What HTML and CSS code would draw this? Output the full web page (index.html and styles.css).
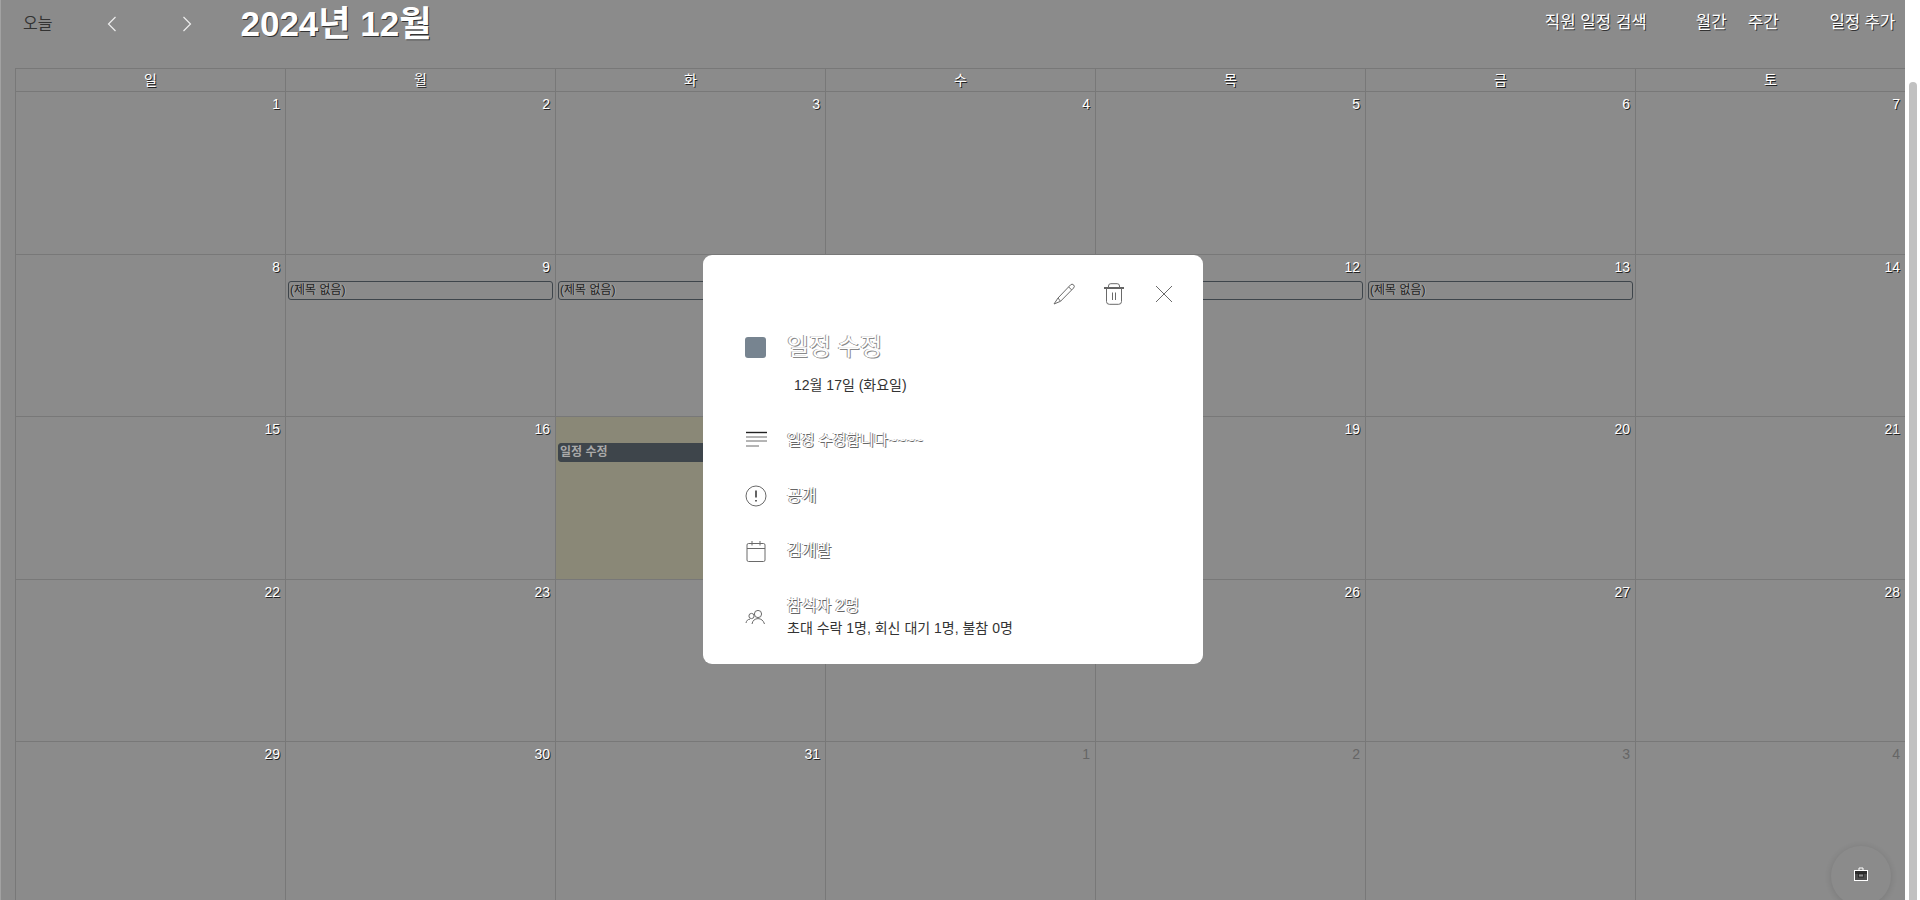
FILE: index.html
```html
<!DOCTYPE html>
<html lang="ko">
<head>
<meta charset="utf-8">
<title>일정 달력</title>
<link rel="stylesheet" href="styles.css">
</head>
<body>
<div class="page">
  <main class="main">
    <header class="toolbar">
      <div class="nav">
        <span class="today-btn">오늘</span>
        <svg class="chev chev-prev" viewBox="0 0 10 16"><path d="M8.500 1 1.500 8l7 7"/></svg>
        <svg class="chev chev-next" viewBox="0 0 10 16"><path d="M1.500 1l7 7-7 7"/></svg>
        <h1 class="month-title">2024년 12월</h1>
      </div>
      <div class="actions">
        <span class="action action-search">직원 일정 검색</span>
        <span class="action action-month">월간</span>
        <span class="action action-week">주간</span>
        <span class="action action-add">일정 추가</span>
      </div>
    </header>
    <section class="calendar">
      <div class="dow">일</div><div class="dow">월</div><div class="dow">화</div><div class="dow">수</div><div class="dow">목</div><div class="dow">금</div><div class="dow">토</div>
      <div class="day"><span class="num">1</span></div>
      <div class="day"><span class="num">2</span></div>
      <div class="day"><span class="num">3</span></div>
      <div class="day"><span class="num">4</span></div>
      <div class="day"><span class="num">5</span></div>
      <div class="day"><span class="num">6</span></div>
      <div class="day"><span class="num">7</span></div>
      <div class="day"><span class="num">8</span></div>
      <div class="day"><span class="num">9</span><div class="event">(제목 없음)</div></div>
      <div class="day"><span class="num">10</span><div class="event">(제목 없음)</div></div>
      <div class="day"><span class="num">11</span><div class="event">(제목 없음)</div></div>
      <div class="day"><span class="num">12</span><div class="event">(제목 없음)</div></div>
      <div class="day"><span class="num">13</span><div class="event">(제목 없음)</div></div>
      <div class="day"><span class="num">14</span></div>
      <div class="day"><span class="num">15</span></div>
      <div class="day"><span class="num">16</span></div>
      <div class="day day-today"><span class="num">17</span><div class="event event-solid">일정 수정</div></div>
      <div class="day"><span class="num">18</span></div>
      <div class="day"><span class="num">19</span></div>
      <div class="day"><span class="num">20</span></div>
      <div class="day"><span class="num">21</span></div>
      <div class="day"><span class="num">22</span></div>
      <div class="day"><span class="num">23</span></div>
      <div class="day"><span class="num">24</span></div>
      <div class="day"><span class="num">25</span></div>
      <div class="day"><span class="num">26</span></div>
      <div class="day"><span class="num">27</span></div>
      <div class="day"><span class="num">28</span></div>
      <div class="day"><span class="num">29</span></div>
      <div class="day"><span class="num">30</span></div>
      <div class="day"><span class="num">31</span></div>
      <div class="day"><span class="num num-other">1</span></div>
      <div class="day"><span class="num num-other">2</span></div>
      <div class="day"><span class="num num-other">3</span></div>
      <div class="day"><span class="num num-other">4</span></div>
    </section>
  </main>
  <aside class="scrollbar"><div class="thumb"></div></aside>
</div>

<div class="fab">
  <svg class="fab-icon" viewBox="0 0 14 14"><rect x="0.5" y="3.500" width="13" height="10" fill="#4a4a4a" stroke="#fff"/><path d="M5 3V1h4v2" fill="none" stroke="#fff"/><rect x="1" y="4" width="12" height="3" fill="#2b2b2b"/><rect x="4.500" y="7" width="5" height="3" fill="#8b8b8b" stroke="#222" stroke-width=".8"/></svg>
</div>

<div class="modal">
  <div class="modal-tools">
    <svg class="ico" viewBox="0 0 22 22"><path d="M5 15 17.500 1.900a2.200 2.200 0 0 1 3.100 0 2.200 2.200 0 0 1 0 3.100L7.500 18.300 1 21zM5 15l2.500 3.300M15.600 3.900l3 3"/></svg>
    <svg class="ico" viewBox="0 0 22 22"><path class="strong" d="M1 5h20"/><path d="M5.500 5V3a2.300 2.300 0 0 1 2.300-2.300h6.400A2.300 2.300 0 0 1 16.500 3v2M3.500 5v13.500A2.800 2.800 0 0 0 6.300 21.300h9.400a2.800 2.800 0 0 0 2.800-2.800V5M9.500 9.500v7.500M12.500 9.500v7.500"/></svg>
    <svg class="ico" viewBox="0 0 22 22"><path d="M3 3l16 16M19 3 3 19"/></svg>
  </div>
  <div class="row row-title">
    <span class="swatch"></span>
    <h2 class="title">일정 수정</h2>
  </div>
  <div class="date">12월 17일 (화요일)</div>
  <div class="row row-desc">
    <svg class="ico" viewBox="0 0 22 22"><path class="strong" d="M1 3.500h21"/><path d="M1 8h21M1 12h21M1 17h13"/></svg>
    <span class="body-text desc-text">일정 수정합니다~~~~</span>
  </div>
  <div class="row row-open">
    <svg class="ico" viewBox="0 0 22 22"><circle cx="11" cy="11" r="10"/><path class="strong" d="M11 5.500v7M11 15v1.600"/></svg>
    <span class="body-text">공개</span>
  </div>
  <div class="row row-owner">
    <svg class="ico" viewBox="0 0 22 22"><path d="M3.500 3.500h15a1.500 1.500 0 0 1 1.500 1.500v15a1.500 1.500 0 0 1-1.500 1.500h-15A1.500 1.500 0 0 1 2 20V5a1.500 1.500 0 0 1 1.500-1.500zM2 8.500h18M7 1v4.500M15 1v4.500"/></svg>
    <span class="body-text">김개발</span>
  </div>
  <div class="row row-people">
    <svg class="ico" viewBox="0 0 22 22"><circle cx="13" cy="8" r="3.600"/><circle cx="6.500" cy="10" r="2.600"/><path d="M7 18c.6-3.600 3-5.400 6-5.400s5.400 1.800 6.500 5.400M1 17c.4-2.400 2-3.800 4-3.800"/></svg>
    <div class="people">
      <div class="body-text people-head">참석자 2명</div>
      <div class="people-sub">초대 수락 1명, 회신 대기 1명, 불참 0명</div>
    </div>
  </div>
</div>
</body>
</html>
```

FILE: styles.css
```css
* { box-sizing: border-box; }
html, body { margin: 0; height: 100%; overflow: hidden; }
body { font-family: "Liberation Sans", "Noto Sans CJK KR", sans-serif; background: #8b8b8b; color: #fff; }

.page { display: flex; height: 900px; overflow: hidden; }
.main { flex: 1; min-width: 0; background: #8b8b8b; box-shadow: inset 1px 0 0 #a2a2a2; }

.scrollbar { width: 15px; padding: 82px 3px 0 4px; background: #fff; }
.thumb { height: 100%; background: #c1c1c1; border-radius: 4px 4px 0 0; }

.toolbar { display: flex; justify-content: space-between; height: 68px; padding: 0 10px 0 23px; }
.nav, .actions { display: flex; align-items: flex-start; }
.today-btn { margin-top: 14px; font-size: 16px; line-height: 20px; color: #333; }
.chev { width: 10px; height: 16px; margin-top: 16px; fill: none; stroke: #eee; stroke-width: 1.2; }
.chev-prev { margin-left: 55px; }
.chev-next { margin-left: 65px; }
.month-title { margin: 2px 0 0 48px; font-size: 35px; line-height: 44px; font-weight: 700; letter-spacing: 0; color: #fff; text-shadow: 1px 1px 0 #333; }

.action { margin-top: 13px; font-size: 16.800px; line-height: 20px; color: #fff; text-shadow: 1px 1px 0 #333; }
.action-month { margin-left: 49px; }
.action-week { margin-left: 21px; }
.action-add { margin-left: 51px; }
.action-add { letter-spacing: -.2px; }

.calendar {
  display: grid;
  grid-template-columns: repeat(7, 270px);
  grid-template-rows: 23px repeat(5, 162.6px);
  margin-left: 15px;
  border-top: 1px solid #787878;
  border-left: 1px solid #787878;
}
.dow {
  border-right: 1px solid #787878;
  border-bottom: 1px solid #787878;
  text-align: center;
  font-size: 14px;
  line-height: 22px;
  text-shadow: 1px 1px 0 #222;
}
.day {
  border-right: 1px solid #787878;
  border-bottom: 1px solid #787878;
  padding: 0 2px;
  text-align: right;
}
.day-today { background: #8a8877; }
.num { display: block; padding: 2px 3px 0 0; font-size: 14px; line-height: 20px; text-shadow: 1px 1px 0 #222; }
.num-other { color: #666; text-shadow: none; }
.event {
  height: 19px;
  margin-top: 4px;
  border: 1px solid #3e454b;
  border-radius: 3px;
  padding-left: 1px;
  text-align: left;
  font-size: 12px;
  line-height: 16px;
  color: #222;
  text-shadow: 1px 0 0 #aaa;
}
.event-solid { background: #3e454b; color: #a9a9a9; text-shadow: none; font-weight: 700; }

.fab {
  position: absolute;
  left: 1831px;
  top: 846px;
  width: 60px;
  height: 60px;
  padding-bottom: 4px;
  display: flex;
  align-items: center;
  justify-content: center;
  border-radius: 50%;
  box-shadow: 0 1px 5px 2px rgba(0, 0, 0, .08);
}
.fab-icon { width: 14px; height: 14px; }

.modal {
  position: absolute;
  left: 703px;
  top: 255px;
  width: 500px;
  height: 409px;
  padding: 28px 28px 0 42px;
  background: #fff;
  border-radius: 9px;
  color: #fff;
}
.modal-tools { display: flex; justify-content: flex-end; gap: 28px; }
.ico { flex: none; width: 22px; height: 22px; fill: none; stroke: #6a6a6a; stroke-width: 1; }
.ico .strong { stroke: #222; stroke-width: 1.4; }
.row { display: flex; align-items: center; gap: 20px; }
.row-title { height: 36px; margin-top: 24px; }
.swatch { flex: none; width: 21px; height: 21px; margin-right: 1px; background: #778490; border-radius: 3px; }
.title { margin: 0; font-size: 24px; line-height: 36px; font-weight: 400; color: #fff; text-shadow: 1px 1px 0 #888, -1px 0 0 #999; }
.date { height: 20px; margin: 10px 0 0 49px; font-size: 14px; line-height: 20px; color: #333; }
.body-text { font-size: 16px; line-height: 24px; color: #fff; text-shadow: 1px 1px 0 #666, -1px 0 0 #999; }
.desc-text { font-size: 15px; }
.row-desc { height: 24px; margin-top: 33px; }
.row-open { height: 24px; margin-top: 32px; }
.row-owner { height: 24px; margin-top: 31px; }
.row-people { margin-top: 32px; }
.people-head { line-height: 22px; }
.people-sub { font-size: 14px; line-height: 22px; color: #333; }
```
